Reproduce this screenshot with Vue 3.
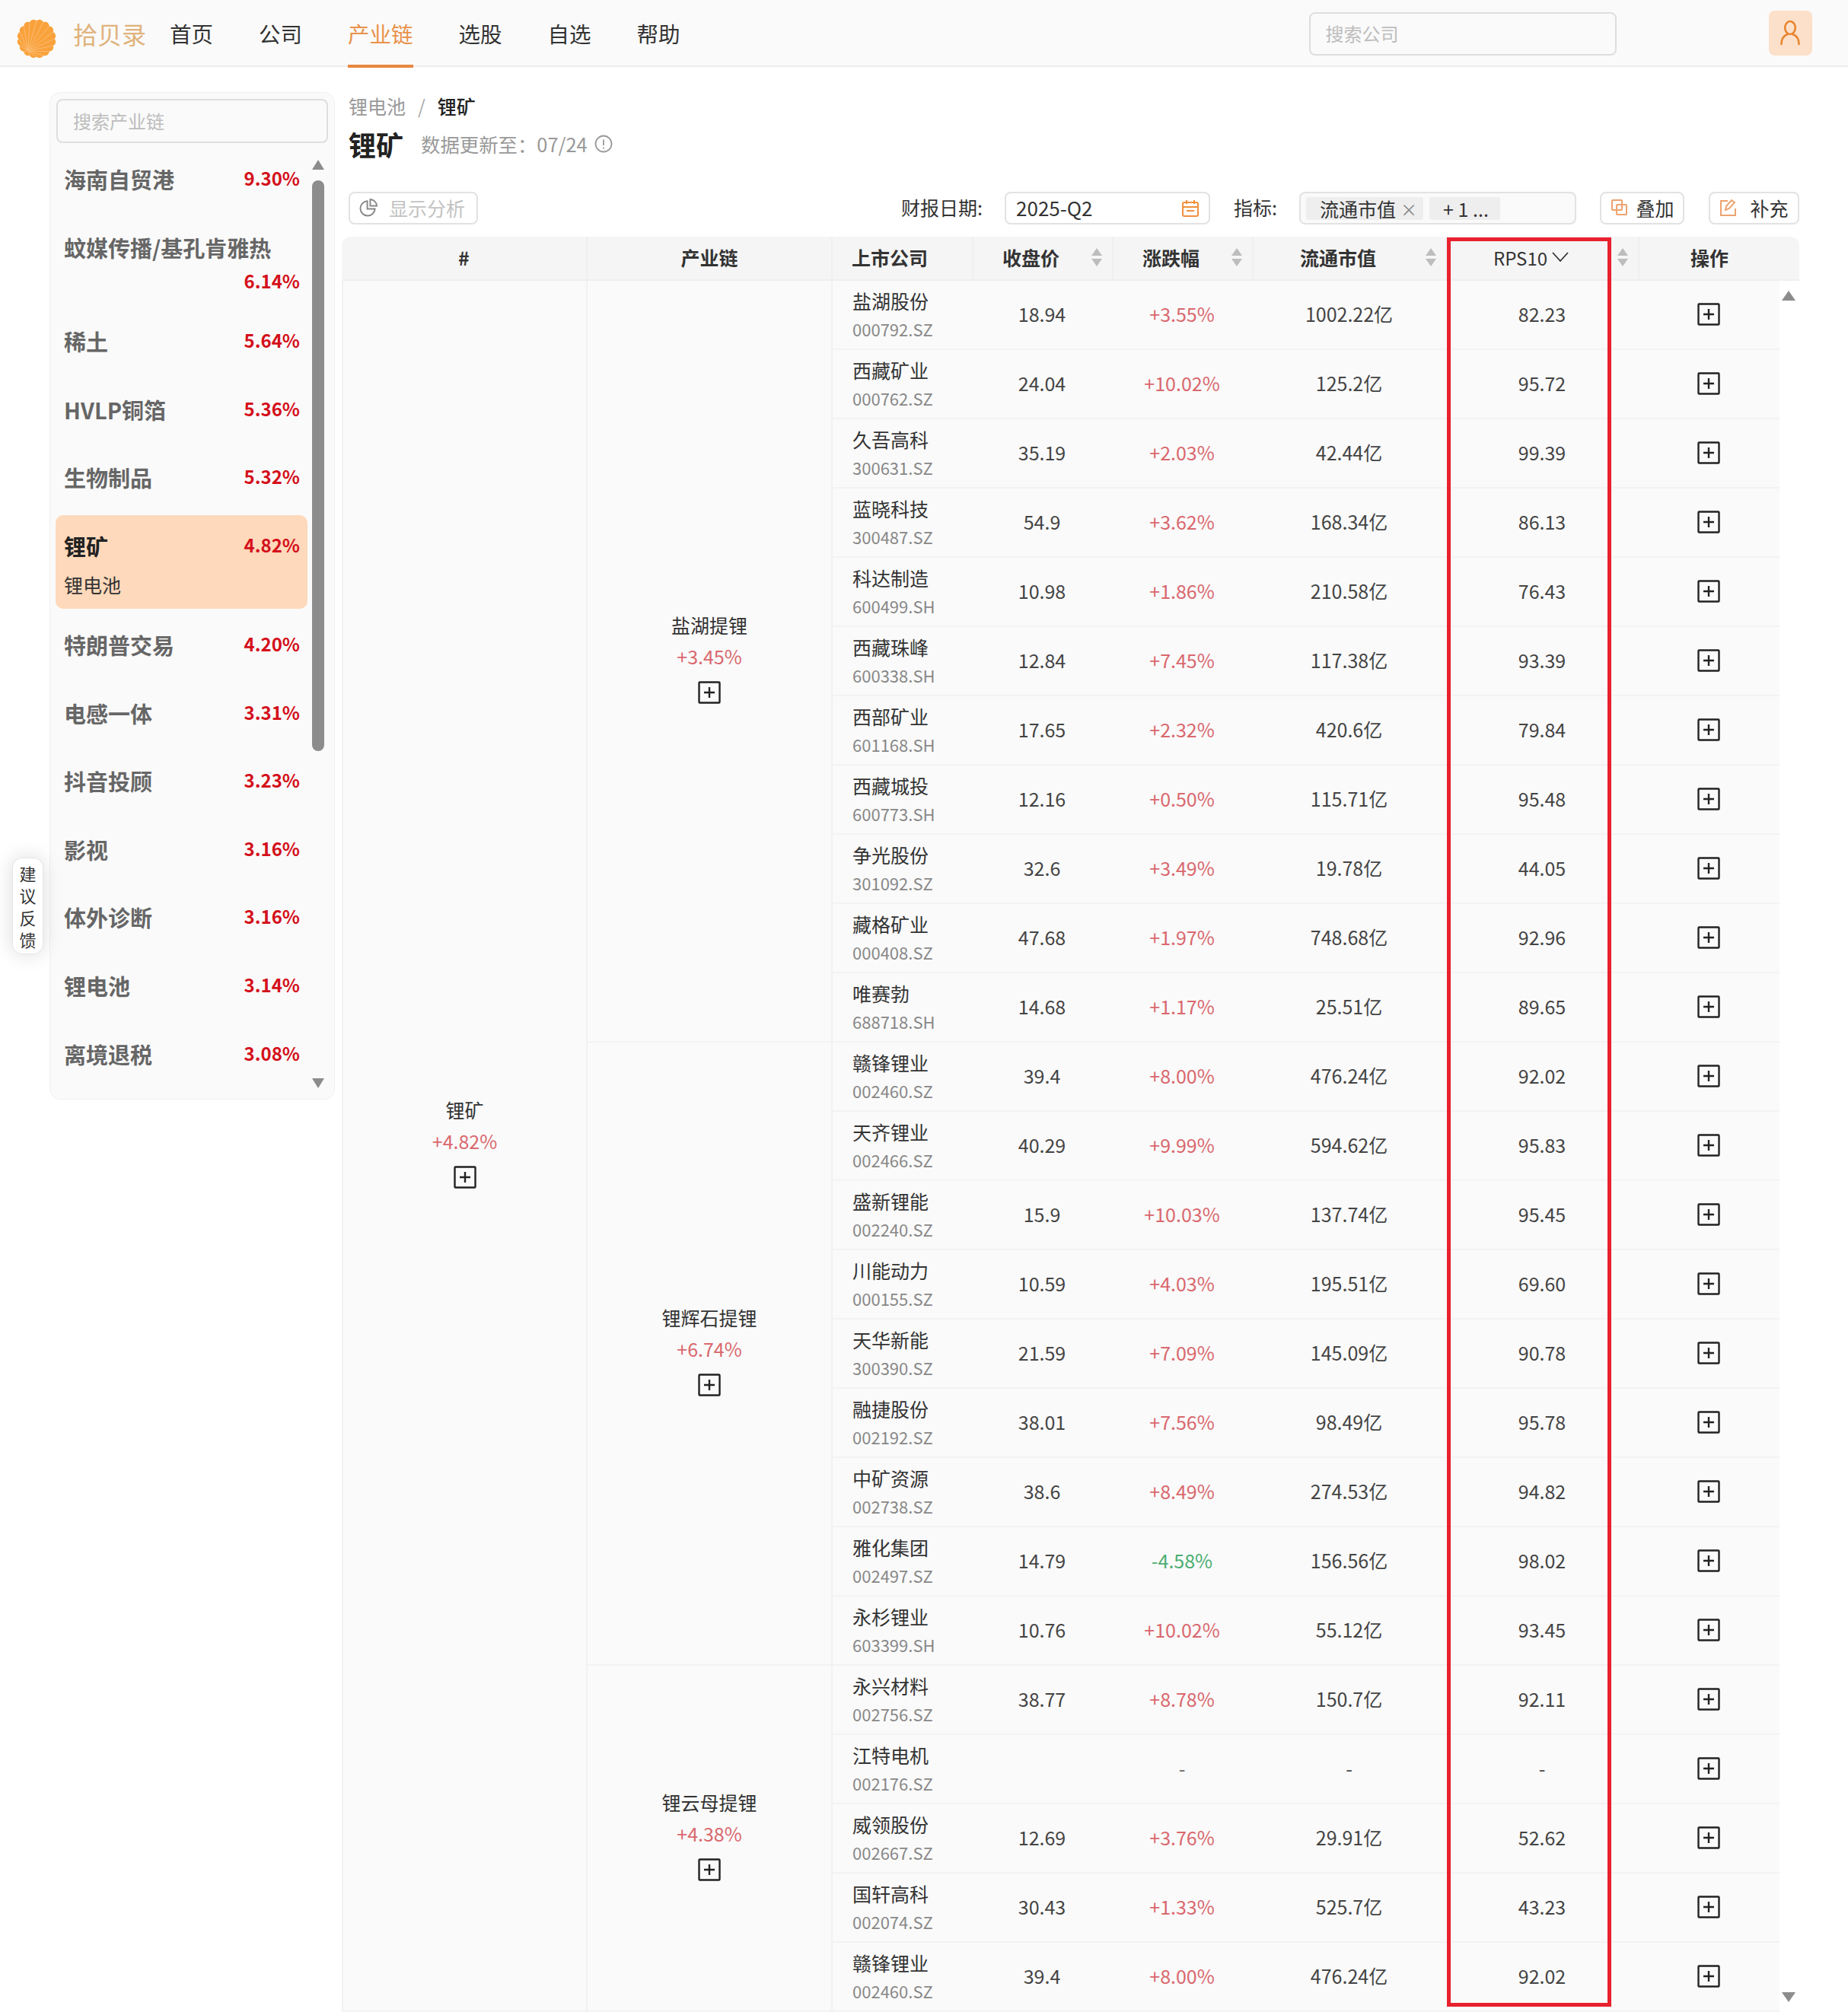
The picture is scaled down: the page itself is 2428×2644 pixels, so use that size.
<script setup>
const navs = [
  { t: '首页' }, { t: '公司' }, { t: '产业链', on: true }, { t: '选股' }, { t: '自选' }, { t: '帮助' }
]
const side = [
  { n: '海南自贸港', p: '9.30%' },
  { n: '蚊媒传播/基孔肯雅热', p: '6.14%', wrap: true },
  { n: '稀土', p: '5.64%' },
  { n: 'HVLP铜箔', p: '5.36%' },
  { n: '生物制品', p: '5.32%' },
  { n: '锂矿', p: '4.82%', sub: '锂电池', on: true },
  { n: '特朗普交易', p: '4.20%' },
  { n: '电感一体', p: '3.31%' },
  { n: '抖音投顾', p: '3.23%' },
  { n: '影视', p: '3.16%' },
  { n: '体外诊断', p: '3.16%' },
  { n: '锂电池', p: '3.14%' },
  { n: '离境退税', p: '3.08%' }
]
const cols = [
  { t: '收盘价' }, { t: '涨跌幅' }, { t: '流通市值' }
]
const raw = `盐湖股份|000792.SZ|18.94|+3.55%|1002.22亿|82.23
西藏矿业|000762.SZ|24.04|+10.02%|125.2亿|95.72
久吾高科|300631.SZ|35.19|+2.03%|42.44亿|99.39
蓝晓科技|300487.SZ|54.9|+3.62%|168.34亿|86.13
科达制造|600499.SH|10.98|+1.86%|210.58亿|76.43
西藏珠峰|600338.SH|12.84|+7.45%|117.38亿|93.39
西部矿业|601168.SH|17.65|+2.32%|420.6亿|79.84
西藏城投|600773.SH|12.16|+0.50%|115.71亿|95.48
争光股份|301092.SZ|32.6|+3.49%|19.78亿|44.05
藏格矿业|000408.SZ|47.68|+1.97%|748.68亿|92.96
唯赛勃|688718.SH|14.68|+1.17%|25.51亿|89.65
赣锋锂业|002460.SZ|39.4|+8.00%|476.24亿|92.02
天齐锂业|002466.SZ|40.29|+9.99%|594.62亿|95.83
盛新锂能|002240.SZ|15.9|+10.03%|137.74亿|95.45
川能动力|000155.SZ|10.59|+4.03%|195.51亿|69.60
天华新能|300390.SZ|21.59|+7.09%|145.09亿|90.78
融捷股份|002192.SZ|38.01|+7.56%|98.49亿|95.78
中矿资源|002738.SZ|38.6|+8.49%|274.53亿|94.82
雅化集团|002497.SZ|14.79|-4.58%|156.56亿|98.02
永杉锂业|603399.SH|10.76|+10.02%|55.12亿|93.45
永兴材料|002756.SZ|38.77|+8.78%|150.7亿|92.11
江特电机|002176.SZ||-|-|-
威领股份|002667.SZ|12.69|+3.76%|29.91亿|52.62
国轩高科|002074.SZ|30.43|+1.33%|525.7亿|43.23
赣锋锂业|002460.SZ|39.4|+8.00%|476.24亿|92.02`
const groups = { 0: { n: '盐湖提锂', p: '+3.45%', span: 11 }, 11: { n: '锂辉石提锂', p: '+6.74%', span: 9 }, 20: { n: '锂云母提锂', p: '+4.38%', span: 5 } }
const rows = raw.split('\n').map((l, i) => {
  const [name, code, price, chg, cap, rps] = l.split('|')
  return { name, code, price, chg, cap, rps, group: groups[i], first: i === 0,
    tone: chg.startsWith('+') ? 'up' : chg === '-' ? 'flat' : 'down' }
})

// scalloped shell outline and the rays that fan out from its hinge
const N = 16
const polar = (r, a) => [(26 + r * Math.cos(a)).toFixed(1), (26 + r * Math.sin(a)).toFixed(1)]
const joints = Array.from({ length: N }, (_, i) => polar(23.8, (i / N) * 2 * Math.PI))
const shell = joints.map((p, i) => {
  const [cx, cy] = polar(28, ((i - 0.5) / N) * 2 * Math.PI)
  return (i === 0 ? `M${joints[N - 1].join(' ')}` : '') + `Q${cx} ${cy} ${p.join(' ')}`
}).join('') + 'Z'
</script>

<template>
  <div class="page">
    <header class="nav">
      <svg class="logo" viewBox="0 0 52 52" width="52" height="52" aria-hidden="true">
        <path fill="#f9a23c" :d="shell" />
        <g stroke="#fcbb72" stroke-width="1">
          <line v-for="(p, i) in joints" :key="i" x1="15" y1="42" :x2="p[0]" :y2="p[1]" />
        </g>
      </svg>
      <span class="brand">拾贝录</span>
      <nav class="links">
        <a v-for="n in navs" :key="n.t" class="link" :class="{ on: n.on }">{{ n.t }}</a>
      </nav>
      <div class="nav-search">搜索公司</div>
      <div class="avatar">
        <svg viewBox="0 0 28 34" width="28" height="34" fill="none" stroke="#e8842f" stroke-width="2.6" stroke-linecap="round">
          <ellipse cx="14" cy="10.5" rx="6.8" ry="8.5" />
          <path d="M2.5 32c0-8 4-11.5 8-13M25.500 32c0-8-4-11.500-8-13" />
        </svg>
      </div>
    </header>

    <div class="body">
      <aside class="side">
        <div class="side-search">搜索产业链</div>
        <div class="side-list">
          <div v-for="s in side" :key="s.n" class="item" :class="{ on: s.on, wrap: s.wrap }">
            <div class="item-top">
              <span class="item-name">{{ s.n }}</span>
              <span class="item-pct">{{ s.p }}</span>
            </div>
            <div v-if="s.sub" class="item-sub">{{ s.sub }}</div>
          </div>
        </div>
        <i class="bar-up"></i>
        <i class="bar-thumb"></i>
        <i class="bar-down"></i>
      </aside>

      <main class="main">
        <div class="crumbs"><span class="crumb">锂电池</span><span class="sep">/</span><span class="crumb-now">锂矿</span></div>
        <div class="title-row">
          <h1 class="title">锂矿</h1>
          <span class="updated">数据更新至：07/24</span>
          <svg class="info" viewBox="0 0 24 24" width="24" height="24" fill="none" stroke="#999" stroke-width="1.800">
            <circle cx="12" cy="12" r="10.500" />
            <path d="M12 6.500v7.500M12 16.500v2" />
          </svg>
        </div>

        <div class="toolbar">
          <button class="btn ghost">
            <svg viewBox="0 0 26 26" width="25" height="25" fill="none" stroke="#888" stroke-width="2">
              <path d="M11 4.500a10 10 0 1 0 10.500 10.500H11z" />
              <path d="M15 2a9.500 9.500 0 0 1 9 9h-9z" />
            </svg>
            显示分析
          </button>
          <span class="spacer"></span>
          <label class="lbl">财报日期:</label>
          <div class="box date">
            <span>2025-Q2</span>
            <svg viewBox="0 0 24 24" width="24" height="24" fill="none" stroke="#f0913f" stroke-width="2">
              <rect x="2" y="4" width="20" height="18" rx="2" />
              <path d="M2 10h20M7 1v5M17 1v5M7 15h10" />
            </svg>
          </div>
          <label class="lbl metric">指标:</label>
          <div class="box tags">
            <span class="tag">流通市值<em class="x">×</em></span>
            <span class="tag more">+ 1 ...</span>
          </div>
          <button class="btn act add">
            <svg viewBox="0 0 21 21" width="21" height="21" fill="none" stroke="#eda36f" stroke-width="2">
              <rect x="1" y="1" width="13" height="13" rx="1" />
              <rect x="7" y="7" width="13" height="13" rx="1" />
            </svg>
            叠加
          </button>
          <button class="btn act fix">
            <svg viewBox="0 0 23 23" width="23" height="23" fill="none" stroke="#eda36f" stroke-width="2">
              <path d="M11 3H2v19h19v-9" />
              <path d="M8 15l1-5 7-8 4 3-7 8z" />
            </svg>
            补充
          </button>
        </div>

        <div class="table-wrap">
          <table class="grid">
            <colgroup>
              <col class="c1" /><col class="c2" /><col class="c3" /><col class="c4" /><col class="c4" /><col class="c6" /><col class="c7" /><col class="c8" /><col class="c9" />
            </colgroup>
            <thead>
              <tr>
                <th>#</th>
                <th>产业链</th>
                <th>上市公司</th>
                <th v-for="c in cols" :key="c.t">
                  <div class="th-sort">
                    <span class="th-label">{{ c.t }}</span>
                    <span class="sort"><i class="s-up"></i><i class="s-down"></i></span>
                  </div>
                </th>
                <th class="th-rps">
                  <div class="th-sort">
                    <span class="th-label plain">RPS10
                      <svg viewBox="0 0 22 14" width="22" height="14" fill="none" stroke="#333" stroke-width="1.800"><path d="M1 1l10 11L21 1" /></svg>
                    </span>
                    <span class="sort"><i class="s-up"></i><i class="s-down"></i></span>
                  </div>
                </th>
                <th colspan="2" class="th-op">操作</th>
              </tr>
            </thead>
            <tbody>
              <tr v-for="(r, i) in rows" :key="i">
                <td v-if="r.first" rowspan="25" class="span-cell">
                  <div class="g-name">锂矿</div>
                  <div class="g-pct">+4.82%</div>
                  <svg class="plus" viewBox="0 0 30 30" width="30" height="30" fill="none" stroke="#222" stroke-width="2.400">
                    <rect x="1.500" y="1.500" width="27" height="27" rx="1" /><path d="M8 15h14M15 8v14" />
                  </svg>
                </td>
                <td v-if="r.group" :rowspan="r.group.span" class="span-cell">
                  <div class="g-name">{{ r.group.n }}</div>
                  <div class="g-pct">{{ r.group.p }}</div>
                  <svg class="plus" viewBox="0 0 30 30" width="30" height="30" fill="none" stroke="#222" stroke-width="2.400">
                    <rect x="1.500" y="1.500" width="27" height="27" rx="1" /><path d="M8 15h14M15 8v14" />
                  </svg>
                </td>
                <td class="co">
                  <div class="co-name">{{ r.name }}</div>
                  <div class="co-code">{{ r.code }}</div>
                </td>
                <td class="num">{{ r.price }}</td>
                <td class="num" :class="r.tone">{{ r.chg }}</td>
                <td class="num">{{ r.cap }}</td>
                <td class="num">{{ r.rps }}</td>
                <td class="num op">
                  <svg class="plus" viewBox="0 0 30 30" width="30" height="30" fill="none" stroke="#222" stroke-width="2.400">
                    <rect x="1.500" y="1.500" width="27" height="27" rx="1" /><path d="M8 15h14M15 8v14" />
                  </svg>
                </td>
                <td v-if="r.first" rowspan="25" class="gutter"></td>
              </tr>
            </tbody>
          </table>
          <i class="t-up"></i>
          <i class="t-down"></i>
          <div class="red-box"></div>
        </div>
      </main>
    </div>

    <div class="feedback"><span>建</span><span>议</span><span>反</span><span>馈</span></div>
  </div>
</template>

<style scoped>
.page {
  position: relative;
  width: 2428px;
  height: 2644px;
  overflow: hidden;
  background: #fff;
  color: #333;
  font-family: "Noto Sans CJK SC", "Noto Sans", sans-serif;
}
.nav {
  height: 88px;
  box-sizing: border-box;
  display: flex;
  align-items: center;
  padding-left: 22px;
  background: #fafafa;
  border-bottom: 2px solid #eee;
}
.logo { flex: none; margin-top: 16px; }
.brand {
  margin-left: 22px;
  font-size: 32px;
  color: #e0b27c;
  width: 128px;
  padding-top: 2px;
}
.links { display: flex; gap: 60px; height: 88px; margin-left: -1px; }
.link {
  height: 88px;
  box-sizing: border-box;
  line-height: 90px;
  font-size: 28.500px;
  color: #333;
  position: relative;
}
.link.on { color: #e9914a; }
.link.on::after {
  content: "";
  position: absolute;
  left: 0; right: 0; bottom: -2px;
  height: 4px;
  background: #e8873f;
}
.nav-search {
  margin-left: 826px;
  width: 404px;
  height: 57px;
  box-sizing: border-box;
  border: 2px solid #dedede;
  border-radius: 8px;
  padding-left: 20px;
  font-size: 24px;
  line-height: 51px;
  color: #bdbdbd;
  margin-top: 2px;
}
.avatar {
  margin-left: 200px;
  width: 57px;
  height: 59px;
  border-radius: 8px;
  background: #fde0c9;
  display: flex;
  align-items: center;
  justify-content: center;
}

.body { display: flex; align-items: flex-start; }

.side {
  position: relative;
  margin: 33px 0 0 65px;
  width: 375px;
  height: 1324px;
  box-sizing: border-box;
  border: 1px solid #f0f0f0;
  border-radius: 14px;
  background: #fafafa;
  padding: 8px 0 0 8px;
  overflow: hidden;
}
.side-search {
  width: 357px;
  height: 58px;
  box-sizing: border-box;
  border: 2px solid #dedede;
  border-radius: 8px;
  padding-left: 20px;
  font-size: 24px;
  line-height: 54px;
  color: #bdbdbd;
}
.side-list { width: 331px; margin-top: 7px; margin-left: -1px; }
.item {
  box-sizing: border-box;
  padding: 20px 10px 20px 11px;
  margin-bottom: 9.600px;
  border-radius: 10px;
  min-height: 80px;
}
.item-top { display: flex; justify-content: space-between; align-items: center; height: 40px; }
.item-name { font-size: 29px; font-weight: 700; color: #666; line-height: 40px; white-space: nowrap; }
.item-pct { font-size: 24px; font-weight: 700; color: #d4101b; line-height: 36px; margin-top: -2px; }
.item.wrap { padding-bottom: 12px; }
.item.wrap .item-top { flex-wrap: wrap; height: auto; }
.item.wrap .item-name { flex: 0 0 100%; }
.item.wrap .item-pct { margin: 6px 0 0 auto; }
.item.on { background: #fed9bb; padding-bottom: 12px; margin-top: 3px; margin-bottom: 7.100px; }
.item.on .item-name { color: #222; }
.item-sub { margin-top: 11px; font-size: 25px; line-height: 40px; color: #333; }
.bar-up, .bar-down {
  position: absolute;
  left: 344px;
  width: 0; height: 0;
  border-left: 8px solid transparent;
  border-right: 8px solid transparent;
}
.bar-up { top: 88px; border-bottom: 13px solid #8c8c8c; }
.bar-down { top: 1295px; border-top: 13px solid #8c8c8c; }
.bar-thumb {
  position: absolute;
  left: 344px;
  top: 115px;
  width: 16px;
  height: 750px;
  border-radius: 8px;
  background: #8c8c8c;
}

.main { margin-left: 9px; width: 1915px; }
.crumbs {
  margin: 34px 0 0 9px;
  height: 34px;
  display: flex;
  align-items: center;
  font-size: 25px;
}
.crumb { color: #999; }
.sep { color: #aaa; margin: 0 16px; }
.crumb-now { color: #222; font-weight: 500; }
.title-row { margin: 8px 0 0 9px; height: 50px; display: flex; align-items: center; }
.title { margin: 0; font-size: 36px; font-weight: 700; color: #222; line-height: 50px; }
.updated { margin-left: 23px; font-size: 25.400px; color: #999; }
.info { margin-left: 9px; }

.toolbar { margin: 38px 0 0 9px; display: flex; align-items: center; height: 43px; }
.spacer { flex: 1; }
.btn {
  height: 43px;
  box-sizing: border-box;
  border: 2px solid #e2e2e2;
  border-radius: 8px;
  background: #fff;
  display: flex;
  align-items: center;
  justify-content: center;
  gap: 10px;
  font: inherit;
  font-size: 25px;
  padding: 0 0 2px;
  color: #333;
}
.ghost { width: 170px; color: #c2c2c2; justify-content: flex-start; padding-left: 12px; gap: 14px; }
.add { width: 111px; margin-left: 31px; gap: 11px; padding-left: 2px; }
.fix { width: 119px; margin-left: 32px; gap: 17px; }
.lbl { font-size: 25px; color: #333; padding-bottom: 3px; }
.metric { margin-left: 31px; }
.box {
  height: 43px;
  box-sizing: border-box;
  border: 2px solid #e2e2e2;
  border-radius: 8px;
  display: flex;
  align-items: center;
  font-size: 25px;
}
.date { margin-left: 29px; width: 270px; padding: 0 12px 2px 13px; justify-content: space-between; font-size: 26px; }
.date svg { margin-top: 2px; }
.tags { margin-left: 29px; width: 364px; padding: 0 7px; gap: 8px; background: #fafafa; }
.tag {
  height: 30px;
  line-height: 28px;
  padding: 0 8px 0 18px;
  background: #eee;
  border-radius: 3px;
  display: inline-flex;
  align-items: center;
}
.tag .x { font-style: normal; color: #888; font-size: 22px; margin-left: 6px; }
.tag.more { width: 93px; box-sizing: border-box; padding: 0 0 0 18px; }

.table-wrap { position: relative; margin-top: 16px; width: 1915px; }
.grid {
  table-layout: fixed;
  border-collapse: separate;
  border-spacing: 0;
  width: 1915px;
}
.c1 { width: 321px; }
.c2 { width: 322px; }
.c3 { width: 185px; }
.c4 { width: 184px; }
.c6 { width: 255px; }
.c7 { width: 252px; }
.c8 { width: 186px; }
.c9 { width: 26px; }
th {
  height: 58px;
  box-sizing: border-box;
  padding: 0 0 2px;
  background: #f5f5f5;
  border-left: 2px solid #efefef;
  border-bottom: 2px solid #efefef;
  font-size: 25px;
  font-weight: 700;
  color: #333;
  text-align: center;
}
th:first-child { border-left: 0; border-top-left-radius: 12px; }
th.th-op { border-top-right-radius: 12px; padding-right: 26px; }
th:nth-child(3) { text-align: left; padding-left: 25px; }
.th-sort { display: grid; grid-template-columns: 1fr auto; align-items: center; padding-right: 12px; }
.th-label { padding-right: 3px; }
.th-label.plain { display: inline-flex; align-items: center; justify-content: center; gap: 6px; font-weight: 400; font-size: 24px; }
.sort { display: flex; flex-direction: column; gap: 4px; width: 16px; align-items: center; }
.s-up, .s-down { width: 0; height: 0; border-left: 7px solid transparent; border-right: 7px solid transparent; }
.s-up { border-bottom: 10px solid #bdbdbd; }
.s-down { border-top: 10px solid #bdbdbd; }
td {
  height: 91px;
  box-sizing: border-box;
  padding: 0;
  background: #fafafa;
  border-bottom: 2px solid #f3f3f3;
  font-size: 25px;
  color: #444;
  text-align: center;
  vertical-align: middle;
}
td.num { padding-bottom: 4px; }
td.gutter { background: #fff; border: 0; }
.span-cell { border-left: 2px solid #f1f1f1; padding-bottom: 10px; }
.g-name { color: #333; line-height: 36px; }
.g-pct { color: #d9686e; line-height: 36px; margin-top: 5px; }
.plus { display: block; margin: 0 auto; }
.span-cell .plus { margin-top: 15px; }
.op .plus { margin-top: 2px; }
.co { text-align: left; padding-left: 26px; border-left: 2px solid #f1f1f1; }
.co-name { font-size: 25px; color: #333; line-height: 34px; margin-top: -2px; }
.co-code { font-size: 22px; color: #888; line-height: 30px; margin-top: 5px; }
.up { color: #d9686e; }
.down { color: #4cae70; }
.flat { color: #666; }
.t-up, .t-down {
  position: absolute;
  left: 1892px;
  width: 0; height: 0;
  border-left: 9px solid transparent;
  border-right: 9px solid transparent;
}
.t-up { top: 71px; border-bottom: 13px solid #8c8c8c; }
.t-down { top: 2307px; border-top: 13px solid #8c8c8c; }
.red-box {
  position: absolute;
  left: 1452px;
  top: 1px;
  width: 216px;
  height: 2325px;
  box-sizing: border-box;
  border: 5px solid #e8212e;
  pointer-events: none;
}

.feedback {
  position: absolute;
  left: 16px;
  top: 1127px;
  width: 41px;
  height: 127px;
  box-sizing: border-box;
  padding-top: 5px;
  background: #fff;
  border: 1px solid #e6e6e6;
  border-radius: 13px;
  box-shadow: 0 0 26px rgba(0, 0, 0, 0.14);
  display: flex;
  flex-direction: column;
  align-items: center;
  font-size: 22px;
  line-height: 29px;
  color: #333;
}
</style>
